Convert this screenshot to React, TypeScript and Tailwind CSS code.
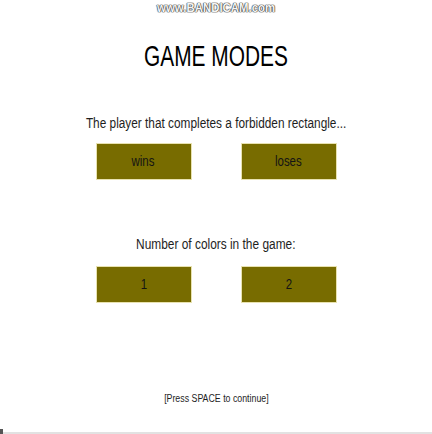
const ModeButton = ({ label }: { label: string }) => (
  <div className="flex h-[35px] w-[94px] items-center justify-center bg-[#786c00] shadow-[0_0_0_1px_#e8e2b0]">
    <span className="inline-block scale-x-[0.82] text-[14px] text-[#141414]">
      {label}
    </span>
  </div>
);

export default function App() {
  return (
    <div className="relative flex h-[434px] w-[432px] flex-col items-center bg-white font-['Liberation_Sans',Arial,sans-serif]">
      <div className="mt-[2px] h-[12px] text-[12px] leading-[12px] font-bold text-[#f4f4f4] [text-shadow:0_0_1px_#444,0_0_1px_#444,0_0_1px_#444,0_0_1px_#444]">
        <span className="inline-block scale-x-[0.95]">www.BANDICAM.com</span>
      </div>

      <h1 className="mt-[25px] text-[29px] leading-[34px] text-black">
        <span className="inline-block scale-x-[0.72]">GAME MODES</span>
      </h1>

      <p className="mt-[41px] text-[14px] leading-[18px] text-[#1e1e1e]">
        <span className="inline-block scale-x-[0.845]">
          The player that completes a forbidden rectangle...
        </span>
      </p>

      <div className="mt-[12px] flex gap-[51px]">
        <ModeButton label="wins" />
        <ModeButton label="loses" />
      </div>

      <p className="mt-[56px] text-[14px] leading-[18px] text-[#1e1e1e]">
        <span className="inline-block scale-x-[0.85]">
          Number of colors in the game:
        </span>
      </p>

      <div className="mt-[14px] flex gap-[51px]">
        <ModeButton label="1" />
        <ModeButton label="2" />
      </div>

      <p className="mt-[91px] text-[10px] leading-[12px] text-[#1e1e1e]">
        <span className="inline-block scale-x-[0.88]">[Press SPACE to continue]</span>
      </p>

      <div className="absolute bottom-0 left-0 h-[2px] w-full bg-[#e2e2e2]" />
      <div className="absolute bottom-0 left-0 h-[5px] w-[3px] bg-[#555]" />
    </div>
  );
}
